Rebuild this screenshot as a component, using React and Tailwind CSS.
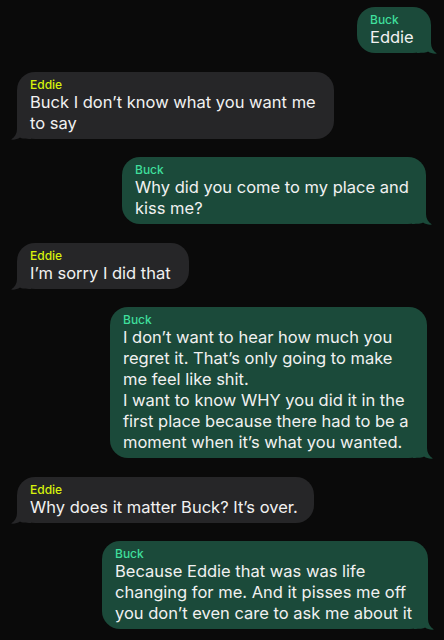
import React from "react";

const messages = [
  { from: "Buck", text: "Eddie", w: "w-[74px]", mr: "mr-[13px]" },
  { from: "Eddie", text: "Buck I don’t know what you want me to say", w: "w-[317px]" },
  { from: "Buck", text: "Why did you come to my place and kiss me?", w: "w-[304px]", mr: "mr-[18px]" },
  { from: "Eddie", text: "I’m sorry I did that", w: "w-[172px]" },
  {
    from: "Buck",
    text: [
      "I don’t want to hear how much you regret it. That’s only going to make me feel like shit.",
      "I want to know WHY you did it in the first place because there had to be a moment when it’s what you wanted.",
    ],
    w: "w-[317px]",
    mr: "mr-[17px]",
  },
  { from: "Eddie", text: "Why does it matter Buck? It’s over.", w: "w-[297px]" },
  {
    from: "Buck",
    text: "Because Eddie that was was life changing for me. And it pisses me off you don’t even care to ask me about it",
    w: "w-[326px]",
    mr: "mr-[16px]",
  },
];

function Tail({ mine }) {
  return (
    <svg
      viewBox="0 0 20 20"
      className={`absolute bottom-[-1px] h-[20px] w-[20px] ${
        mine ? "right-[-6px] fill-[#1b4a3a]" : "left-[-6px] -scale-x-100 fill-[#262628]"
      }`}
    >
      <path d="M0 19 L0 0 L14 0 L14 9 C14 13.5 16 17 20 19.6 C16.5 20 13.5 19.2 11 17.6 C9 18.8 6 19 0 19 Z" />
    </svg>
  );
}

function Bubble({ msg }) {
  const mine = msg.from === "Buck";
  const lines = Array.isArray(msg.text) ? msg.text : [msg.text];
  return (
    <div className={`flex ${mine ? "justify-end" : "justify-start pl-[17px]"} ${msg.mr || ""}`}>
      <div
        className={`relative ${msg.w} rounded-[18px] pl-[13px] pr-[12px] pt-[5px] pb-[5px] ${
          mine ? "bg-[#1b4a3a]" : "bg-[#262628]"
        }`}
      >
        <Tail mine={mine} />
        <div
          className={`relative text-[12px] leading-[15px] font-medium ${
            mine ? "text-[#3fdf9c]" : "text-[#d7f20c]"
          }`}
        >
          {msg.from}
        </div>
        {lines.map((l, i) => (
          <p key={i} className="relative text-[16.5px] leading-[21px] text-[#f1f1f1]">
            {l}
          </p>
        ))}
      </div>
    </div>
  );
}

export default function App() {
  return (
    <div
      className="min-h-[640px] w-[444px] bg-[#0a0a0a] pt-[7px] flex flex-col gap-[18.5px] overflow-hidden"
      style={{ fontFamily: "Inter, 'Noto Sans', sans-serif" }}
    >
      {messages.map((m, i) => (
        <Bubble key={i} msg={m} />
      ))}
    </div>
  );
}
